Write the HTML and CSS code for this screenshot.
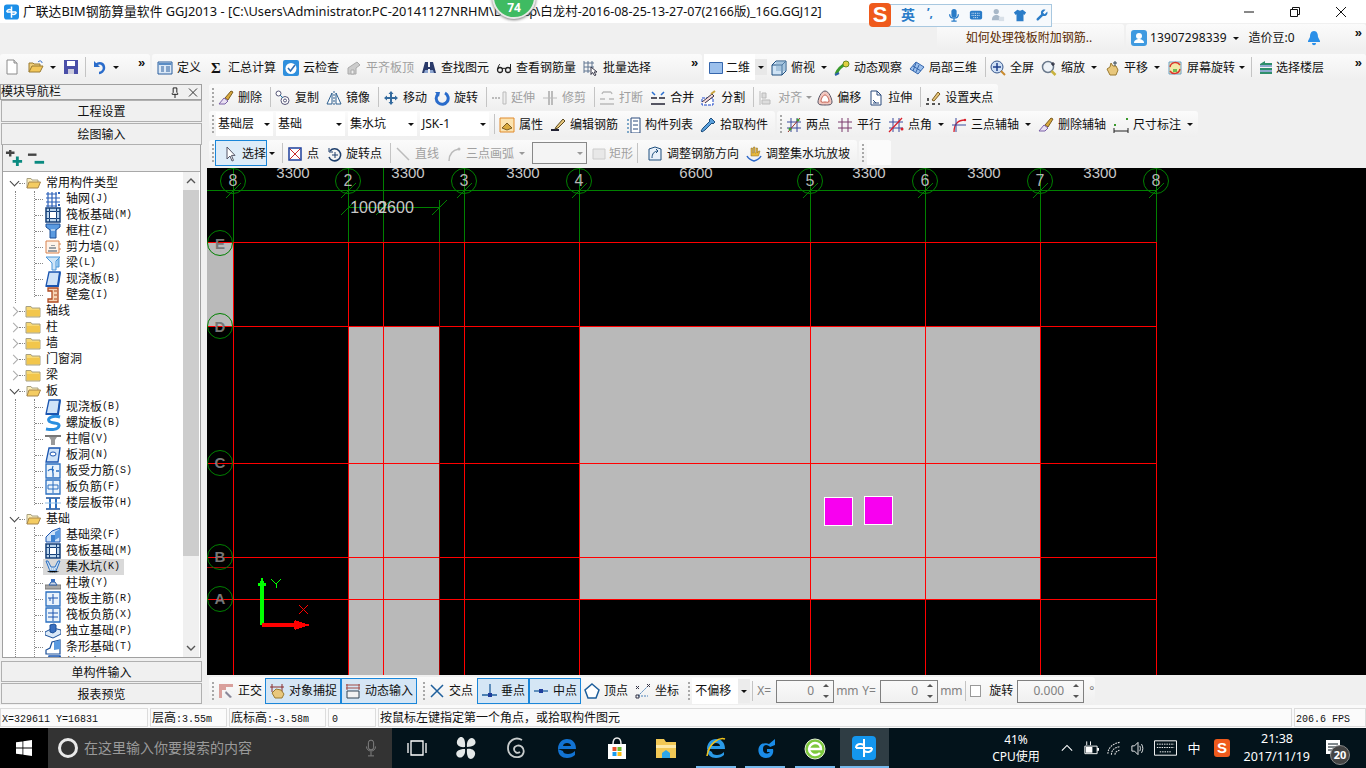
FILE: index.html
```html
<!DOCTYPE html>
<html lang="zh-CN">
<head>
<meta charset="utf-8">
<title>广联达BIM钢筋算量软件</title>
<link rel="stylesheet" href="styles.css">
</head>
<body>
<svg class="defs" aria-hidden="true">
<symbol id="new" viewBox="0 0 16 16"><path d="M3 1h7l3 3v11H3z" fill="#fff" stroke="#8a8a8a"/><path d="M10 1v3h3" fill="#ddd" stroke="#8a8a8a"/></symbol>
<symbol id="open" viewBox="0 0 16 16"><path d="M1 13V4h4l1 1h6v2" fill="#f0cf7a" stroke="#9a7a30"/><path d="M1 13l3-6h11l-3 6z" fill="#f3c75a" stroke="#9a7a30"/><path d="M10 3c2-2 4-1 4 1" stroke="#2a66c8" fill="none"/></symbol>
<symbol id="save" viewBox="0 0 16 16"><path d="M1 1h14v14H1z" fill="#4a4fa8"/><path d="M4 2h8v5H4z" fill="#fff"/><path d="M5 10h6v5H5z" fill="#ccd"/></symbol>
<symbol id="undo" viewBox="0 0 16 16"><path d="M3 2v6h6z" fill="#2a6ccb"/><path d="M5 6c3-3 8-2 8 3 0 3-3 5-5 5" stroke="#2a6ccb" stroke-width="2.5" fill="none"/></symbol>
<symbol id="def" viewBox="0 0 16 16"><path d="M1 2h14v12H1z" fill="#dbe8f6" stroke="#2a5f9e"/><path d="M1.500 3h13v2h-13z" fill="#5a8cc4"/><path d="M4 7h3M4 9h3M4 11h3M9 7h4M9 9h4M9 11h4" stroke="#2a5f9e"/></symbol>
<symbol id="cloud" viewBox="0 0 16 16"><rect width="16" height="16" y="0" rx="2" fill="#2f8fdd"/><circle cx="8" cy="8.500" r="5.500" fill="#fff"/><path d="M5 8l2.500 3L12 5" stroke="#2f6fb5" stroke-width="1.600" fill="none"/></symbol>
<symbol id="flat" viewBox="0 0 16 16"><path d="M2 8l9-6 3 3-4 3v6H2z" fill="#ccc" stroke="#aaa"/><path d="M5 10h3v4H5z" fill="#eee" stroke="#aaa"/></symbol>
<symbol id="bino" viewBox="0 0 16 16"><path d="M4 2h3v5h2V2h3l3 11H9V9H7v4H1z" fill="#2a3a6a"/><path d="M3 13h4v-3H4zM9 13h4l-1-3H9z" fill="#8ea6d0"/></symbol>
<symbol id="specs" viewBox="0 0 16 16"><circle cx="4" cy="10" r="2.500" fill="none" stroke="#222" stroke-width="1.300"/><circle cx="12" cy="10" r="2.500" fill="none" stroke="#222" stroke-width="1.300"/><path d="M6 9c1-1 3-1 4 0M2 9c0-3 1-4 2-5M14.500 9V4" stroke="#222" fill="none"/></symbol>
<symbol id="batch" viewBox="0 0 16 16"><path d="M1 1v12M5 1v12M9 1v8M1 3h10M1 7h10M1 11h6" stroke="#5f7590" fill="none"/><path d="M8 7l6 5-3 0 2 3-1.500 .5-2-3-1.500 2z" fill="#fff" stroke="#334"/></symbol>
<symbol id="v2d" viewBox="0 0 16 16"><path d="M1.500 2.500h13v11h-13z" fill="#9cc0ec" stroke="#3566ad"/></symbol>
<symbol id="cube" viewBox="0 0 16 16"><path d="M1 5l4-4h10v10l-4 4H1z" fill="#cfe3f5" stroke="#1e4f7e"/><path d="M1 5h10v10M11 5l4-4" fill="none" stroke="#1e4f7e"/><path d="M5 1h10v10H5z" fill="#7fa8c8" fill-opacity=".5"/></symbol>
<symbol id="orbit" viewBox="0 0 16 16"><path d="M2 14c2-5 5-8 11-11" stroke="#3a9a2c" stroke-width="3" fill="none"/><circle cx="12" cy="4" r="3" fill="#e0d040" stroke="#6a8a20"/><path d="M1 15l4-2" stroke="#2b5fa8" stroke-width="2"/></symbol>
<symbol id="local3d" viewBox="0 0 16 16"><path d="M1 9l6-7 8 5-6 7z" fill="#9cc0ec" stroke="#3566ad"/><path d="M4 6l8 5M7 3l-3 8M10 5l-3 7" stroke="#3566ad" fill="none"/></symbol>
<symbol id="full" viewBox="0 0 16 16"><circle cx="7" cy="7" r="6" fill="#cfe0f5" stroke="#37578c"/><path d="M7 3v8M3 7h8" stroke="#1f3f8c" stroke-width="1.500"/><path d="M11 11l4 4" stroke="#c98a2c" stroke-width="2"/></symbol>
<symbol id="zoom" viewBox="0 0 16 16"><circle cx="7" cy="7" r="5.500" fill="#eef3f8" stroke="#6b7a8c" stroke-width="1.500"/><path d="M10.500 11l4 4" stroke="#c9b23c" stroke-width="2.500"/><path d="M12 2v4M10 4h4" stroke="#223"/></symbol>
<symbol id="pan" viewBox="0 0 16 16"><path d="M3 9l3-2 1-4 2 3 3 0 2 4-2 5H6z" fill="#e8c77c" stroke="#9a7a30"/><path d="M11 1v5M9 3h4" stroke="#345"/></symbol>
<symbol id="rot" viewBox="0 0 16 16"><path d="M2 2h12v12H2z" fill="#f3e9a8" stroke="#6aa0c8"/><path d="M3 7a5.500 5.500 0 0 1 10-2M13 9a5.500 5.500 0 0 1-10 2" stroke="#d9352c" stroke-width="1.500" fill="none"/><path d="M6 9h4v3H6z" fill="#6cbd54"/></symbol>
<symbol id="floor" viewBox="0 0 16 16"><path d="M2 4l5-3v2h7v2H2zM2 8h12v2H2zM2 12h12v2H2z" fill="#2e8f6a"/><path d="M2 6h12M2 11h12" stroke="#2b5fa8"/></symbol>
<symbol id="del" viewBox="0 0 16 16"><path d="M7 8l6-7 2 1-5 8z" fill="#d9a93c" stroke="#7a5a20"/><path d="M6 8l4 3-3 3H1z" fill="#e9e0f2" stroke="#7a60a8"/></symbol>
<symbol id="copy" viewBox="0 0 16 16"><circle cx="3.500" cy="3.500" r="2.500" fill="#fff" stroke="#557"/><circle cx="10" cy="10.500" r="4" fill="#fff" stroke="#557"/><circle cx="10" cy="10.500" r="1.500" fill="none" stroke="#557"/><path d="M5 5l3 3" stroke="#27a"/></symbol>
<symbol id="mirror" viewBox="0 0 16 16"><path d="M1 14L6 3v11zM15 14L10 3v11z" fill="#fff" stroke="#2d5f8f"/><path d="M8 1v14" stroke="#2d5f8f" stroke-dasharray="2 1"/></symbol>
<symbol id="move" viewBox="0 0 16 16"><path d="M8 1l2.500 3H9v3h3V5.500L15 8l-3 2.500V9H9v3h1.500L8 15l-2.500-3H7V9H4v1.500L1 8l3-2.500V7h3V4H5.500z" fill="#336a9e"/></symbol>
<symbol id="rotate" viewBox="0 0 16 16"><path d="M11 3a6 6 0 1 1-7 1" stroke="#2a6ccb" stroke-width="3" fill="none"/><path d="M1 2l5 0-1 5z" fill="#2a6ccb"/></symbol>
<symbol id="ext" viewBox="0 0 16 16"><path d="M1 8h9" stroke="#bbb" stroke-dasharray="2 1" stroke-width="2"/><path d="M12 2h3v12h-3z" fill="#eee" stroke="#bbb"/></symbol>
<symbol id="trim" viewBox="0 0 16 16"><path d="M7 1v14M10 1v14" stroke="#bbb" stroke-width="2"/><path d="M1 8h14" stroke="#bbb"/></symbol>
<symbol id="brk" viewBox="0 0 16 16"><path d="M1 9h5M10 9h5M1 14h14M4 2h8M4 2l-1 2M12 2l1 2" stroke="#bbb" stroke-width="1.500" fill="none"/></symbol>
<symbol id="merge" viewBox="0 0 16 16"><path d="M1 8h6M9 8h6M1 14h14" stroke="#223" stroke-width="1.300"/><path d="M2 2l3 3M14 2l-3 3" stroke="#2b6fd0" stroke-width="1.500"/></symbol>
<symbol id="split" viewBox="0 0 16 16"><path d="M1 8h11v7H1z" fill="#fff" stroke="#1a44c8" stroke-dasharray="3 1"/><path d="M1 12l10-8 2 2-9 7" fill="#f7d7d7" stroke="#334"/><path d="M10 4l4-3" stroke="#c9a23c" stroke-width="2"/></symbol>
<symbol id="align" viewBox="0 0 16 16"><path d="M2 1v14" stroke="#bbb"/><path d="M4 3h4v5H4zM4 10h8v4H4z" fill="#ddd" stroke="#bbb"/></symbol>
<symbol id="offset" viewBox="0 0 16 16"><path d="M8 1c4 0 7 8 7 11s-3 3-7 3-7 0-7-3S4 1 8 1z" fill="#f2c8c0" stroke="#556"/><path d="M8 5c2 0 4 4 4 6s-2 1-4 1-4 1-4-1 2-6 4-6z" fill="#fff" stroke="#c45a4a"/></symbol>
<symbol id="stretch" viewBox="0 0 16 16"><path d="M3 1h6l4 4v10H3z" fill="#fff" stroke="#2a4a7c"/><path d="M9 1v4h4M5 10l3 3M5 13h6" stroke="#2a4a7c" fill="none"/></symbol>
<symbol id="grip2" viewBox="0 0 16 16"><path d="M1 14h3M7 14h3M13 14h2M3 8v3" stroke="#222" stroke-width="1.500"/><path d="M7 10l6-8 2 2-6 7z" fill="#e8c77c" stroke="#7a5a20"/></symbol>
<symbol id="prop" viewBox="0 0 16 16"><path d="M1 1h14v14H1z" fill="#fbe3b0" stroke="#e08a2c"/><path d="M3 11l5-5 5 5-5 2z" fill="#d9a93c" stroke="#7a5a20"/></symbol>
<symbol id="edit" viewBox="0 0 16 16"><path d="M1 13h8" stroke="#223" stroke-width="2"/><path d="M6 10l7-8 2 2-7 7-3 1z" fill="#e8c77c" stroke="#5a4a20"/></symbol>
<symbol id="list" viewBox="0 0 16 16"><path d="M2 2h2v2H2zM2 6h2v2H2zM2 10h2v2H2zM2 14h2v2H2z" fill="#7fa8c8"/><path d="M6 1h9v15H6z" fill="#fff" stroke="#2a4a7c"/><path d="M8 4h5M8 8h5M8 12h5" stroke="#2a4a7c"/></symbol>
<symbol id="pick" viewBox="0 0 16 16"><path d="M11 1l4 4-2 2-1-1-7 7-3 2-1-1 2-3 7-7-1-1z" fill="#5aa0dc" stroke="#1e4f7e"/></symbol>
<symbol id="twop" viewBox="0 0 16 16"><path d="M1 5h14M1 11h14M5 1v14M11 1v14" stroke="#3a4a9c"/><path d="M2 15L14 1" stroke="#a0342c"/><circle cx="4" cy="12" r="1.500" fill="#3a9a2c"/><circle cx="12" cy="3" r="1.500" fill="#3a9a2c"/></symbol>
<symbol id="para" viewBox="0 0 16 16"><path d="M1 5h14M1 11h14M5 1v14M11 1v14" stroke="#7a3a6c"/></symbol>
<symbol id="angle" viewBox="0 0 16 16"><path d="M1 5h14M1 11h14M5 1v14M11 1v14" stroke="#3a4a9c"/><path d="M1 15L14 1" stroke="#d9202c" stroke-width="1.300"/><circle cx="14" cy="12" r="1.500" fill="#d9202c"/></symbol>
<symbol id="arc3" viewBox="0 0 16 16"><path d="M3 15C3 7 7 3 14 3" stroke="#d9202c" fill="none" stroke-width="1.300"/><path d="M1 8h14M5 1v14" stroke="#3a4a9c"/><circle cx="14" cy="3" r="1.200" fill="#d9202c"/></symbol>
<symbol id="dim" viewBox="0 0 16 16"><path d="M1 11v5M15 11v5M1 14h14" stroke="#222"/><path d="M1 7h2v2H1zM13 1h2v2h-2z" fill="#3a9a2c"/></symbol>
<symbol id="cursor" viewBox="0 0 16 16"><path d="M5 1v12l3-3 2 5 1.500-.6-2-5H13z" fill="#fff" stroke="#556"/></symbol>
<symbol id="pt" viewBox="0 0 16 16"><path d="M2 2h12v12H2z" fill="#fff" stroke="#1e3f9c" stroke-width="1.500"/><path d="M3 3l10 10M13 3L3 13" stroke="#c82c2c"/></symbol>
<symbol id="rotpt" viewBox="0 0 16 16"><path d="M3 2v4h4" stroke="#1e3f6c" fill="none"/><path d="M4 5a6 6 0 1 1-1 6" stroke="#1e3f6c" stroke-width="1.500" fill="none"/><path d="M9 6v6M6 9h6" stroke="#1e3f6c"/></symbol>
<symbol id="line" viewBox="0 0 16 16"><path d="M2 2l12 12" stroke="#bbb" stroke-width="1.500"/></symbol>
<symbol id="arc" viewBox="0 0 16 16"><path d="M3 15C3 8 7 4 13 3" stroke="#bbb" stroke-width="1.500" fill="none"/><circle cx="13" cy="3" r="1.500" fill="#bbb"/></symbol>
<symbol id="rect" viewBox="0 0 16 16"><path d="M2 3h12v10H2z" fill="#e8e8e8" stroke="#ccc"/></symbol>
<symbol id="adjd" viewBox="0 0 16 16"><path d="M2 3l6-2 6 2v11H2z" fill="#e8f0fa" stroke="#1e4f7e"/><path d="M5 12c0-4 2-7 6-7M9 3l2 2-2 2" stroke="#1e4f7e" fill="none"/></symbol>
<symbol id="adjs" viewBox="0 0 16 16"><path d="M5 10V2h1.500v5h1V1H9v6h1V2h1.500v5l1-2h1.500l-1.500 5z" fill="#e8b83c" stroke="#8a6a20" stroke-width=".5"/><path d="M1 10c1 2 3 4 7 5 4-1 6-3 7-5" stroke="#2a66c8" fill="none" stroke-width="1.500"/></symbol>
<symbol id="ortho" viewBox="0 0 16 16"><path d="M1 1h14v3H8v3H4v8H1z" fill="#d9a09c"/><path d="M8 8l6 6-2 1-5-5z" fill="#889" /></symbol>
<symbol id="snap" viewBox="0 0 16 16"><path d="M3 1v8M13 1v8M1 4h14" stroke="#8a2c2c"/><path d="M3 10l4-4 5 1 3 4-2 4H6z" fill="#e8c77c" stroke="#9a7a30"/></symbol>
<symbol id="dyn" viewBox="0 0 16 16"><path d="M1 2h14M1 5h14M2 1v6M14 1v6" stroke="#a04a44"/><path d="M2 8h12v7H2z" fill="#f2f2f2" stroke="#345"/></symbol>
<symbol id="cross" viewBox="0 0 16 16"><path d="M2 2l12 12M14 2L2 14" stroke="#1e5f9c" stroke-width="1.500"/></symbol>
<symbol id="perp" viewBox="0 0 16 16"><path d="M9 1v11M1 12h15" stroke="#1e5f9c" stroke-width="1.300"/><path d="M7 10h4v4H7z" fill="#1e3f9c"/></symbol>
<symbol id="mid" viewBox="0 0 16 16"><path d="M1 8h14" stroke="#1e5f9c" stroke-width="1.300"/><path d="M6 6h4v4H6z" fill="#1e3f9c"/></symbol>
<symbol id="vert" viewBox="0 0 16 16"><path d="M8 1l7 6-3 8H4L1 7z" fill="#fff" stroke="#1e5f9c" stroke-width="1.500"/></symbol>
<symbol id="coord" viewBox="0 0 16 16"><path d="M3 13h10M3 13l9-9" stroke="#4a80b8" stroke-dasharray="2 1"/><path d="M1 3l3 3M4 3L1 6M12 1l3 3M15 1l-3 3M1 12h3v3H1z" stroke="#334" fill="none"/></symbol>
<symbol id="plusp" viewBox="0 0 20 20"><path d="M1 4h9M5.500 1v7" stroke="#444" stroke-width="2.500"/><path d="M8 13h10M13 8v10" stroke="#0a8a80" stroke-width="3"/></symbol>
<symbol id="minusm" viewBox="0 0 20 20"><path d="M1 6h9" stroke="#444" stroke-width="2.500"/><path d="M8 14h10" stroke="#0a8a80" stroke-width="3"/></symbol>
<symbol id="folder" viewBox="0 0 16 16"><path d="M1 3.500h5l1 1.500h8v9H1z" fill="#f7d874" stroke="#a8a080"/><path d="M2 7h13v6H2z" fill="#f2c64c"/></symbol>
<symbol id="folderopen" viewBox="0 0 16 16"><path d="M2 13V3.500h4l1 1.500h6v2" fill="#fbeebc" stroke="#a8a080"/><path d="M2 13l2-6h11.500L13 13z" fill="#f4cc62" stroke="#a8864a"/></symbol>
<symbol id="grid" viewBox="0 0 16 16"><path d="M1 3h11M1 7h14M1 11h14M1 15h11M3 1v15M7 1v15M11 1v15" stroke="#2a5fb8" stroke-width="1.200"/><path d="M13 1h2v2h-2zM13 13h2v2h-2z" fill="#2a5fb8"/></symbol>
<symbol id="raft" viewBox="0 0 16 16"><path d="M1 1h14v14H1z" fill="#bcd6ee" stroke="#143f78" stroke-width="1.500"/><path d="M4.500 4.500h7v7h-7z" fill="#fff" stroke="#143f78"/><path d="M1 4.500h3M1 11.500h3M12 4.500h3M12 11.500h3M4.500 1v3M11.500 1v3M4.500 12v3M11.500 12v3" stroke="#143f78"/></symbol>
<symbol id="col" viewBox="0 0 16 16"><path d="M1 1h14v3l-4 3v8H5V7L1 4z" fill="#5a9ae0" stroke="#1a4f98"/><path d="M6 7h4" stroke="#fff"/></symbol>
<symbol id="wall" viewBox="0 0 16 16"><path d="M1 2h13v12H1z" fill="#fdf3ea" stroke="#d9824c"/><path d="M3 11h9v2H3zM4 8h7v2H4zM6 6h4v1H6z" fill="#9aa0a6"/><path d="M14 5h2M14 10h2" stroke="#d9824c"/></symbol>
<symbol id="beam" viewBox="0 0 16 16"><path d="M1 2h14l-4 4v9H7V8L4 5z" fill="#cfe6f8" stroke="#4a96d8"/><path d="M11 6l3-3v9h-3" fill="#8fc4ee" stroke="#4a96d8"/></symbol>
<symbol id="slab" viewBox="0 0 16 16"><path d="M4 1h11l-2 14H1z" fill="#cfe3f8" stroke="#1a55b0" stroke-width="1.300"/><path d="M1 15h12l2-14" fill="none" stroke="#1a55b0" stroke-width="2"/></symbol>
<symbol id="niche" viewBox="0 0 16 16"><path d="M3 1h10v14H3v-3h4V4H3z" fill="#f7d3b4" stroke="#b04a20" stroke-width="1.300"/><path d="M9 4h3M9 8h3M9 12h3" stroke="#b04a20"/></symbol>
<symbol id="spiral" viewBox="0 0 16 16"><path d="M15 2C8 0 2 3 4 6s11 1 10 5-8 4-13 3" stroke="#2a8fe0" stroke-width="3" fill="none"/></symbol>
<symbol id="cap" viewBox="0 0 16 16"><path d="M0 4h16v2H0z" fill="#777"/><path d="M4 6h8l-2 3v5H6V9z" fill="#9a9a9a"/></symbol>
<symbol id="hole" viewBox="0 0 16 16"><path d="M4 1h11l-2 14H1z" fill="#cfe3f8" stroke="#1a55b0" stroke-width="1.300"/><ellipse cx="8" cy="7" rx="3" ry="2" fill="#fff" stroke="#1a55b0"/></symbol>
<symbol id="rebar" viewBox="0 0 16 16"><path d="M1 1h14v14H1z" fill="#eaf3fb" stroke="#2a6fc0" stroke-width="1.300"/><path d="M3 8c2-3 4-1 6-1M8 3c-2 3 1 6 0 11M11 8h3" stroke="#2a6fc0" fill="none" stroke-width="1.300"/></symbol>
<symbol id="neg" viewBox="0 0 16 16"><path d="M1 1h14v14H1z" fill="#eaf3fb" stroke="#2a6fc0" stroke-width="1.300"/><path d="M3 6h10v4H3zM8 2v12" stroke="#2a6fc0" fill="none"/></symbol>
<symbol id="band" viewBox="0 0 16 16"><path d="M1 3h14M1 14h14" stroke="#1a4f98" stroke-width="1.500"/><path d="M5 3v11M11 3v11" stroke="#2a6fc0" stroke-width="2"/><path d="M0 8h16" stroke="#8fbfe8"/></symbol>
<symbol id="fbeam" viewBox="0 0 16 16"><path d="M1 15V10l6-6 8-3v14z" fill="#cfe3f8" stroke="#1a55b0"/><path d="M6 15V8h4v7" fill="#3a80d0"/><path d="M10 5l5-3v8l-5 3" fill="#5a9ae0"/></symbol>
<symbol id="pit" viewBox="0 0 16 16"><path d="M1 2h2l3 6h4l3-6h2l-4 10H5z" fill="#cfe3f8" stroke="#2a6fc0"/><path d="M2 12c2 2 10 2 12 0M4 10h8" stroke="#8fa8c0" stroke-dasharray="1 1"/></symbol>
<symbol id="pier" viewBox="0 0 16 16"><path d="M0 10h16v4H0z" fill="#a8a8a8" stroke="#777"/><path d="M4 10l2-3h4l2 3z" fill="#cfd8e8" stroke="#2a5fa8"/><path d="M6 4h4v3H6z" fill="#3a70c0"/></symbol>
<symbol id="main" viewBox="0 0 16 16"><path d="M1 1h14v14H1z" fill="#eaf3fb" stroke="#2a6fc0" stroke-width="1.300"/><path d="M3 7h10M8 3v10M5 7v3" stroke="#1a55b0" fill="none"/></symbol>
<symbol id="fneg" viewBox="0 0 16 16"><path d="M1 1h14v14H1z" fill="#eaf3fb" stroke="#2a6fc0" stroke-width="1.300"/><path d="M3 6h10M3 10h10M8 2v12" stroke="#1a55b0"/></symbol>
<symbol id="indep" viewBox="0 0 16 16"><path d="M0 9l8-4 8 2v4l-8 4-8-3z" fill="#dbe9f7" stroke="#1a4f98"/><path d="M5 9V2l4-1 2 1v6l-3 2z" fill="#3a70c0" stroke="#1a4f98"/></symbol>
<symbol id="stripf" viewBox="0 0 16 16"><path d="M1 15v-4l4-2 2-6 8-2v14z" fill="#fff" stroke="#1a4f98" stroke-width="1.200"/><path d="M9 3l6-2v9l-6 1z" fill="#5a9ae0"/></symbol>
</svg>

<div class="app">
  <header class="title">
    <svg class="logo" viewBox="0 0 16 16"><rect width="16" height="16" rx="3" fill="#1c8fe8"/><path d="M8 2v12M3 8c0-3 3-3 5-2M13 8c0 3-3 3-5 2M3 8h10" stroke="#fff" stroke-width="1.600" fill="none"/></svg>
    <span class="title-text"><span class="tl">广联达BIM钢筋算量软件 GGJ2013 - [C:\Users\Administrator.PC-20141127NRHM\De<span class="under">sktop</span></span>\白龙村-2016-08-25-13-27-07(2166版)_16G.GGJ12]</span>
    <div class="winbtns">
      <span class="winbtn"><svg viewBox="0 0 12 12"><path d="M1 6h10" stroke="#111"/></svg></span>
      <span class="winbtn"><svg viewBox="0 0 12 12"><path d="M1.500 3.500h7v7h-7zM3.500 3.500v-2h7v7h-2" fill="none" stroke="#111"/></svg></span>
      <span class="winbtn"><svg viewBox="0 0 12 12"><path d="M1 1l10 10M11 1L1 11" stroke="#111"/></svg></span>
    </div>
  </header>
  <div class="badge">74</div>
  <div class="sogou">
    <span class="sg-s">S</span>
    <span class="sg-en">英</span>
    <span class="sg-i sg-p">’,</span>
    <svg class="sg-i" viewBox="0 0 16 16"><rect x="5" y="1" width="6" height="10" rx="3" fill="#2a7cc8"/><path d="M3 7c0 6 10 6 10 0M8 12v3M5 15h6" stroke="#2a7cc8" fill="none" stroke-width="1.500"/></svg>
    <svg class="sg-i" viewBox="0 0 16 16"><rect x="1" y="3" width="14" height="10" rx="2" fill="#2a7cc8"/><path d="M3 6h10M3 8.500h10M5 11h6" stroke="#fff" stroke-dasharray="1 1"/></svg>
    <svg class="sg-i" viewBox="0 0 16 16"><circle cx="6" cy="4" r="3" fill="#a8b8c8"/><path d="M1 14c0-5 3-6 5-6s3 .5 4 2v4z" fill="#a8b8c8"/><path d="M9 10h6v5H9z" fill="#d8e0e8"/></svg>
    <svg class="sg-i" viewBox="0 0 16 16"><path d="M5 2l3 1 3-1 4 3-2 3-1-1v8H4V7L3 8 1 5z" fill="#2a7cc8"/></svg>
    <svg class="sg-i" viewBox="0 0 16 16"><path d="M14 4l-3 3-2-2 3-3c-3-1-6 1-5 5L2 12c-1 2 1 3 2 2l5-5c4 1 6-2 5-5z" fill="#2a7cc8"/></svg>
  </div>

  <div class="row row1">
    <div class="seg seg-news"><span class="news">如何处理筏板附加钢筋..</span></div>
    <div class="seg seg-user">
      <svg class="i user-ic" viewBox="0 0 16 16"><rect width="16" height="16" rx="3" fill="#3f9ae0"/><circle cx="8" cy="6" r="3" fill="#fff"/><path d="M3 13c0-3 3-4 5-4s5 1 5 4z" fill="#fff"/></svg>
      <span class="phone">13907298339</span><span class="ar ar-user"></span><span class="beans">造价豆:0</span>
      <svg class="i bell" viewBox="0 0 16 16"><path d="M8 1c3 0 4 3 4 6l2 4v1H2v-1l2-4c0-3 1-6 4-6z" fill="#2a8fe8"/><path d="M6 13h4c0 3-4 3-4 0z" fill="#2a8fe8"/></svg>
      <span class="more more-end">»</span>
    </div>
  </div>

  <div class="row row2">
    <div class="seg seg-file">
      <svg class="i m4"><use href="#new"/></svg>
      <svg class="i m8"><use href="#open"/></svg>
      <span class="ar ar-file"></span>
      <svg class="i m4"><use href="#save"/></svg>
      <span class="sep sep-file"></span>
      <svg class="i m5"><use href="#undo"/></svg>
      <span class="ar ar-file"></span>
      <span class="more more-file">»</span>
    </div>
    <div class="seg seg-main">
      <a class="t"><svg class="i"><use href="#def"/></svg>定义</a>
      <a class="t"><span class="i sigma">Σ</span>汇总计算</a>
      <a class="t"><svg class="i"><use href="#cloud"/></svg>云检查</a>
      <a class="t off"><svg class="i"><use href="#flat"/></svg>平齐板顶</a>
      <a class="t"><svg class="i"><use href="#bino"/></svg>查找图元</a>
      <a class="t"><svg class="i"><use href="#specs"/></svg>查看钢筋量</a>
      <a class="t"><svg class="i"><use href="#batch"/></svg>批量选择</a>
      <span class="more more-main">»</span>
    </div>
    <div class="seg seg-view">
      <a class="t t-2d"><svg class="i"><use href="#v2d"/></svg>二维</a><span class="ar ar-2d"></span>
      <a class="t"><svg class="i"><use href="#cube"/></svg>俯视</a><span class="ar"></span>
      <a class="t"><svg class="i"><use href="#orbit"/></svg>动态观察</a>
      <a class="t"><svg class="i"><use href="#local3d"/></svg>局部三维</a>
      <span class="sep"></span>
      <a class="t"><svg class="i"><use href="#full"/></svg>全屏</a>
      <a class="t"><svg class="i"><use href="#zoom"/></svg>缩放</a><span class="ar"></span>
      <a class="t"><svg class="i"><use href="#pan"/></svg>平移</a><span class="ar"></span>
      <a class="t"><svg class="i"><use href="#rot"/></svg>屏幕旋转</a><span class="ar ar-s"></span>
      <span class="sep"></span>
      <a class="t tight"><svg class="i"><use href="#floor"/></svg>选择楼层</a>
      <span class="more more-end">»</span>
    </div>
  </div>

  <div class="work">
    <aside class="side">
      <div class="side-head"><span>模块导航栏</span><span class="side-acts"><svg viewBox="0 0 10 12"><path d="M3 1h4v5l1 1v1H2V7l1-1zM5 8v4" stroke="#111" fill="none"/></svg><svg viewBox="0 0 10 10"><path d="M1 1l8 8M9 1L1 9" stroke="#333"/></svg></span></div>
      <div class="side-btn b1">工程设置</div>
      <div class="side-btn b2">绘图输入</div>
      <div class="panel">
        <div class="panel-top"><svg class="pm"><use href="#plusp"/></svg><svg class="pm"><use href="#minusm"/></svg></div>
        <div class="panel-body">
          <div class="tree">
            <div class="node"><span class="chev open"></span><span class="dots"></span><svg class="i"><use href="#folderopen"/></svg><span>常用构件类型</span></div>
            <div class="kout"><div class="kin">
              <div class="kid"><span class="lbl"><svg class="i"><use href="#grid"/></svg>轴网<span class="k">(J)</span></span></div>
              <div class="kid"><span class="lbl"><svg class="i"><use href="#raft"/></svg>筏板基础<span class="k">(M)</span></span></div>
              <div class="kid"><span class="lbl"><svg class="i"><use href="#col"/></svg>框柱<span class="k">(Z)</span></span></div>
              <div class="kid"><span class="lbl"><svg class="i"><use href="#wall"/></svg>剪力墙<span class="k">(Q)</span></span></div>
              <div class="kid"><span class="lbl"><svg class="i"><use href="#beam"/></svg>梁<span class="k">(L)</span></span></div>
              <div class="kid"><span class="lbl"><svg class="i"><use href="#slab"/></svg>现浇板<span class="k">(B)</span></span></div>
              <div class="kid"><span class="lbl"><svg class="i"><use href="#niche"/></svg>壁龛<span class="k">(I)</span></span></div>
            </div></div>
            <div class="node"><span class="chev"></span><span class="dots"></span><svg class="i"><use href="#folder"/></svg><span>轴线</span></div>
            <div class="node"><span class="chev"></span><span class="dots"></span><svg class="i"><use href="#folder"/></svg><span>柱</span></div>
            <div class="node"><span class="chev"></span><span class="dots"></span><svg class="i"><use href="#folder"/></svg><span>墙</span></div>
            <div class="node"><span class="chev"></span><span class="dots"></span><svg class="i"><use href="#folder"/></svg><span>门窗洞</span></div>
            <div class="node"><span class="chev"></span><span class="dots"></span><svg class="i"><use href="#folder"/></svg><span>梁</span></div>
            <div class="node"><span class="chev open"></span><span class="dots"></span><svg class="i"><use href="#folderopen"/></svg><span>板</span></div>
            <div class="kout"><div class="kin">
              <div class="kid"><span class="lbl"><svg class="i"><use href="#slab"/></svg>现浇板<span class="k">(B)</span></span></div>
              <div class="kid"><span class="lbl"><svg class="i"><use href="#spiral"/></svg>螺旋板<span class="k">(B)</span></span></div>
              <div class="kid"><span class="lbl"><svg class="i"><use href="#cap"/></svg>柱帽<span class="k">(V)</span></span></div>
              <div class="kid"><span class="lbl"><svg class="i"><use href="#hole"/></svg>板洞<span class="k">(N)</span></span></div>
              <div class="kid"><span class="lbl"><svg class="i"><use href="#rebar"/></svg>板受力筋<span class="k">(S)</span></span></div>
              <div class="kid"><span class="lbl"><svg class="i"><use href="#neg"/></svg>板负筋<span class="k">(F)</span></span></div>
              <div class="kid"><span class="lbl"><svg class="i"><use href="#band"/></svg>楼层板带<span class="k">(H)</span></span></div>
            </div></div>
            <div class="node"><span class="chev open"></span><span class="dots"></span><svg class="i"><use href="#folderopen"/></svg><span>基础</span></div>
            <div class="kout"><div class="kin">
              <div class="kid"><span class="lbl"><svg class="i"><use href="#fbeam"/></svg>基础梁<span class="k">(F)</span></span></div>
              <div class="kid"><span class="lbl"><svg class="i"><use href="#raft"/></svg>筏板基础<span class="k">(M)</span></span></div>
              <div class="kid"><span class="lbl sel"><svg class="i"><use href="#pit"/></svg>集水坑<span class="k">(K)</span></span></div>
              <div class="kid"><span class="lbl"><svg class="i"><use href="#pier"/></svg>柱墩<span class="k">(Y)</span></span></div>
              <div class="kid"><span class="lbl"><svg class="i"><use href="#main"/></svg>筏板主筋<span class="k">(R)</span></span></div>
              <div class="kid"><span class="lbl"><svg class="i"><use href="#fneg"/></svg>筏板负筋<span class="k">(X)</span></span></div>
              <div class="kid"><span class="lbl"><svg class="i"><use href="#indep"/></svg>独立基础<span class="k">(P)</span></span></div>
              <div class="kid"><span class="lbl"><svg class="i"><use href="#stripf"/></svg>条形基础<span class="k">(T)</span></span></div>
              <div class="kid"><span class="lbl"><svg class="i"><use href="#slab"/></svg>桩承台<span class="k">(V)</span></span></div>
            </div></div>
          </div>
          <div class="vbar">
            <span class="vb-btn"><svg viewBox="0 0 10 6"><path d="M1 5l4-4 4 4" stroke="#555" stroke-width="1.400" fill="none"/></svg></span>
            <span class="vb-thumb"></span>
            <span class="vb-track"></span>
            <span class="vb-btn"><svg viewBox="0 0 10 6"><path d="M1 1l4 4 4-4" stroke="#555" stroke-width="1.400" fill="none"/></svg></span>
          </div>
        </div>
      </div>
      <div class="side-btn b3">单构件输入</div>
      <div class="side-btn b4">报表预览</div>
    </aside>

    <main class="right">
      <div class="bar bar3">
        <div class="seg seg-edit">
          <span class="grip"></span>
          <a class="t"><svg class="i"><use href="#del"/></svg>删除</a>
          <span class="sep"></span>
          <a class="t"><svg class="i"><use href="#copy"/></svg>复制</a>
          <a class="t"><svg class="i"><use href="#mirror"/></svg>镜像</a>
          <span class="sep"></span>
          <a class="t"><svg class="i"><use href="#move"/></svg>移动</a>
          <a class="t"><svg class="i"><use href="#rotate"/></svg>旋转</a>
          <span class="sep"></span>
          <a class="t off"><svg class="i"><use href="#ext"/></svg>延伸</a>
          <a class="t off"><svg class="i"><use href="#trim"/></svg>修剪</a>
          <span class="sep"></span>
          <a class="t off"><svg class="i"><use href="#brk"/></svg>打断</a>
          <a class="t"><svg class="i"><use href="#merge"/></svg>合并</a>
          <a class="t"><svg class="i"><use href="#split"/></svg>分割</a>
          <span class="sep"></span>
          <a class="t off"><svg class="i"><use href="#align"/></svg>对齐</a><span class="ar ar-s ar-off"></span>
          <a class="t"><svg class="i"><use href="#offset"/></svg>偏移</a>
          <a class="t"><svg class="i"><use href="#stretch"/></svg>拉伸</a>
          <span class="sep"></span>
          <a class="t"><svg class="i"><use href="#grip2"/></svg>设置夹点</a>
        </div>
      </div>
      <div class="bar bar4">
        <div class="seg seg-comp">
          <span class="grip"></span>
          <span class="combo c1">基础层<span class="ar ar-c"></span></span>
          <span class="combo c2">基础<span class="ar ar-c"></span></span>
          <span class="combo c2">集水坑<span class="ar ar-c"></span></span>
          <span class="combo c2">JSK-1<span class="ar ar-c"></span></span>
          <span class="sep"></span>
          <a class="t"><svg class="i"><use href="#prop"/></svg>属性</a>
          <a class="t"><svg class="i"><use href="#edit"/></svg>编辑钢筋</a>
          <a class="t"><svg class="i"><use href="#list"/></svg>构件列表</a>
          <a class="t"><svg class="i"><use href="#pick"/></svg>拾取构件</a>
        </div>
        <div class="seg seg-aux">
          <span class="grip"></span>
          <a class="t"><svg class="i"><use href="#twop"/></svg>两点</a>
          <a class="t"><svg class="i"><use href="#para"/></svg>平行</a>
          <a class="t"><svg class="i"><use href="#angle"/></svg>点角</a><span class="ar"></span>
          <a class="t"><svg class="i"><use href="#arc3"/></svg>三点辅轴</a><span class="ar"></span>
          <a class="t"><svg class="i"><use href="#del"/></svg>删除辅轴</a>
          <a class="t"><svg class="i"><use href="#dim"/></svg>尺寸标注</a><span class="ar"></span>
        </div>
      </div>
      <div class="bar bar5">
        <div class="seg seg-draw">
          <span class="grip"></span>
          <a class="t act act-sel"><svg class="i"><use href="#cursor"/></svg>选择</a><span class="ar ar-10"></span>
          <span class="sep"></span>
          <a class="t"><svg class="i"><use href="#pt"/></svg>点</a>
          <a class="t"><svg class="i"><use href="#rotpt"/></svg>旋转点</a>
          <span class="sep"></span>
          <a class="t off"><svg class="i"><use href="#line"/></svg>直线</a>
          <a class="t off"><svg class="i"><use href="#arc"/></svg>三点画弧</a><span class="ar ar-10 ar-off"></span>
          <span class="combo c3"><span class="ar ar-c ar-off"></span></span>
          <a class="t off t-rect"><svg class="i"><use href="#rect"/></svg>矩形</a>
          <span class="sep sep-rect"></span>
          <a class="t"><svg class="i"><use href="#adjd"/></svg>调整钢筋方向</a>
          <a class="t"><svg class="i"><use href="#adjs"/></svg>调整集水坑放坡</a>
        </div>
        <div class="seg seg-blank"><span class="grip"></span><span class="blank"></span></div>
      </div>

      <svg class="cad" viewBox="207 168 1159 507" role="img" aria-label="CAD 绘图区">
        <rect class="bg" x="207" y="168" width="1159" height="507"/>
        <path class="slab-g" d="M207 243h26v84h-26zM348 327h91v348h-91zM579 327h461v272H579z"/>
        <path class="gl" d="M207 190.500H1157M233.500 168V243M348.500 168V243M383.500 168V243M439.500 200V243M464.500 168V243M579.500 168V243M810.500 168V243M925.500 168V243M1040.500 168V243M1156.500 168V243M348 207.500H439"/>
        <path class="rd" d="M207 242.500H1157M207 326.500H1157M207 463.500H1157M207 557.500H1157M207 599.500H1157M233.500 243V675M348.500 243V675M383.500 243V675M464.500 243V675M579.500 243V675M810.500 243V675M925.500 243V675M1040.500 243V675M1156.500 243V675"/>
        <path class="rd-dk" d="M439.500 243V675M207 567.500H233"/>
        <g class="gl bub">
          <circle cx="233" cy="181" r="12.500"/><circle cx="348" cy="181" r="12.500"/><circle cx="464" cy="181" r="12.500"/><circle cx="579" cy="181" r="12.500"/><circle cx="810" cy="181" r="12.500"/><circle cx="925" cy="181" r="12.500"/><circle cx="1040" cy="181" r="12.500"/><circle cx="1156" cy="181" r="12.500"/>
          <circle cx="220" cy="243" r="12.500"/><circle cx="220" cy="326" r="12.500"/><circle cx="220" cy="463" r="12.500"/><circle cx="220" cy="557" r="12.500"/><circle cx="220" cy="599" r="12.500"/>
        </g>
        <path class="tick" d="M226 198L241 183M341 198L356 183M457 198L472 183M572 198L587 183M803 198L818 183M918 198L933 183M1033 198L1048 183M1149 198L1164 183M341 215L356 200M376 215L391 200M432 215L447 200"/>
        <g class="dim">
          <text x="293" y="178">3300</text><text x="408" y="178">3300</text><text x="523" y="178">3300</text><text x="696" y="178">6600</text><text x="869" y="178">3300</text><text x="984" y="178">3300</text><text x="1100" y="178">3300</text>
        </g>
        <g class="dim dim2"><text x="368" y="213">1000</text><text x="396" y="213">2600</text></g>
        <g class="num">
          <text x="233" y="186">8</text><text x="348" y="186">2</text><text x="464" y="186">3</text><text x="579" y="186">4</text><text x="810" y="186">5</text><text x="925" y="186">6</text><text x="1040" y="186">7</text><text x="1156" y="186">8</text>
        </g>
        <g class="ltr"><text x="220" y="249">E</text><text x="220" y="332">D</text><text x="220" y="468">C</text><text x="220" y="562">B</text><text x="220" y="604">A</text></g>
        <rect class="pit" x="824.500" y="497.500" width="28" height="28"/>
        <rect class="pit" x="864.500" y="496.500" width="28" height="28"/>
        <path class="ax-g" d="M260 625V586h-2v-3h2l2-7 2 7h2v3h-2v39z"/>
        <path class="ax-r" d="M262 623h32v-2l1-1 8 3 8 2-8 2-8 3-1-1v-2h-32z"/>
        <path class="lab-g" d="M271 579l5 5 5-5M276 584v4"/>
        <path class="lab-r" d="M299 605l9 9M308 605l-9 9"/>
      </svg>

      <div class="bar bar6">
        <div class="seg seg-snap">
          <span class="grip"></span>
          <a class="t"><svg class="i"><use href="#ortho"/></svg>正交</a>
          <a class="t act act-g"><svg class="i"><use href="#snap"/></svg>对象捕捉</a>
          <a class="t act"><svg class="i"><use href="#dyn"/></svg>动态输入</a>
          <span class="grip grip-s"></span>
          <a class="t"><svg class="i"><use href="#cross"/></svg>交点</a>
          <a class="t act act-g act-p"><svg class="i"><use href="#perp"/></svg>垂点</a>
          <a class="t act"><svg class="i"><use href="#mid"/></svg>中点</a>
          <a class="t t-v"><svg class="i"><use href="#vert"/></svg>顶点</a>
          <a class="t"><svg class="i"><use href="#coord"/></svg>坐标</a>
          <span class="grip grip-o"></span>
          <span class="combo c4">不偏移</span><span class="ar ar-10 ar-box"></span>
          <span class="sep sep-x"></span>
          <span class="lbl-x">X=</span>
          <span class="spin"><span class="val">0</span><span class="ud"><i class="up"></i><i class="dn"></i></span></span>
          <span class="unit">mm</span><span class="lbl-y">Y=</span>
          <span class="spin"><span class="val">0</span><span class="ud"><i class="up"></i><i class="dn"></i></span></span>
          <span class="unit">mm</span>
          <span class="sep sep-x"></span>
          <span class="chk"></span>
          <span class="rot-l">旋转</span>
          <span class="spin spin-w"><span class="val">0.000</span><span class="ud"><i class="up"></i><i class="dn"></i></span></span>
          <span class="deg">°</span>
        </div>
      </div>
    </main>
  </div>

  <div class="status">
    <span class="cell s1"><span class="k">X=329611 Y=16831</span></span>
    <span class="cell s2">层高<span class="k">:3.55m</span></span>
    <span class="cell s3">底标高<span class="k">:-3.58m</span></span>
    <span class="cell s4"><span class="k">0</span></span>
    <span class="cell s5">按鼠标左键指定第一个角点，或拾取构件图元</span>
    <span class="cell s6"><span class="k">206.6 FPS</span></span>
  </div>

  <footer class="task">
    <span class="tb-win"><svg viewBox="0 0 16 16"><path d="M0 2.300l6.500-.9v6.200H0zM7.300 1.300L16 0v7.600H7.300zM0 8.400h6.500v6.200L0 13.700zM7.300 8.400H16V16l-8.700-1.200z" fill="#fff"/></svg></span>
    <div class="tb-search">
      <span class="cortana"></span>
      <span class="tb-hint">在这里输入你要搜索的内容</span>
      <svg class="tb-mic" viewBox="0 0 16 24"><rect x="4.500" y="1.500" width="7" height="13" rx="3.500" fill="none" stroke="#9a9a9a"/><path d="M2 10c0 8 12 8 12 0M8 17v5M4 22.500h8" fill="none" stroke="#9a9a9a"/></svg>
    </div>
    <span class="tb"><svg viewBox="0 0 24 24"><path d="M6 5h12v14H6zM3 7v10M21 7v10" fill="none" stroke="#fff" stroke-width="1.300"/></svg></span>
    <span class="tb"><svg viewBox="0 0 24 24"><path d="M11 11C4 12 1 7 4 3s8-2 7 8zM13 11c-1-7 4-11 7-8s2 8-7 8zM13 13c7-1 10 4 7 8s-8 2-7-8zM11 13c1 7-4 10-7 8s-3-8 7-8z" fill="#e4e8e8"/></svg></span>
    <span class="tb"><svg viewBox="0 0 24 24"><path d="M18 4C11 0 4 5 4 12s6 10 11 9 6-7 3-10-8-1-8 2 3 5 6 3" fill="none" stroke="#c8cccc" stroke-width="1.800"/></svg></span>
    <span class="tb tb-gap"><svg viewBox="0 0 24 24"><path d="M3 13h18C21 6 17 3 12 3S3 7 3 13c0 6 4 9 9 9 3 0 6-1 8-3v-4c-2 2-4 3-7 3-3 0-5-1-5-3zM8 10c0-2 2-3 4-3s4 1 4 3z" fill="#1273d3" fill-rule="evenodd"/></svg></span>
    <span class="tb"><svg viewBox="0 0 24 24"><path d="M3 8h18v15H3z" fill="#fff"/><path d="M8 8c0-8 8-8 8 0" fill="none" stroke="#eee" stroke-width="1.500"/><path d="M7.500 11h4v4h-4z" fill="#e8502c"/><path d="M12.500 11h4v4h-4z" fill="#6cbb2c"/><path d="M7.500 16h4v4h-4z" fill="#1a9cf0"/><path d="M12.500 16h4v4h-4z" fill="#fbbc14"/></svg></span>
    <span class="tb"><svg viewBox="0 0 24 24"><path d="M2 3h8l2 3h10v16H2z" fill="#f2c855"/><path d="M2 9h20v3H2z" fill="#fde9a8"/><path d="M8 22v-5l4-3 4 3v5z" fill="#2fa5e8"/></svg></span>
    <span class="tb run"><svg viewBox="0 0 24 24"><path d="M3 13h18C21 6 17 3 12 3S3 7 3 13c0 6 4 9 9 9 3 0 6-1 8-3v-3c-2 2-4 3-7 3-3 0-5-1-5-3zM8 10c0-2 2-3 4-3s4 1 4 3z" fill="#2a9ae8" fill-rule="evenodd"/><path d="M21 3C15 1 5 7 3 20" fill="none" stroke="#eec11c" stroke-width="1.600"/></svg></span>
    <span class="tb run"><svg viewBox="0 0 24 24"><path d="M22 3l-6 5c-2-1-8-2-10 3s1 11 7 11 8-5 7-9h-6v3h3c-1 2-7 3-7-3s6-4 7-2l5-2z" fill="#1a8ce8"/></svg></span>
    <span class="tb run"><svg viewBox="0 0 24 24"><circle cx="12" cy="13" r="10" fill="#7cc83c" stroke="#e4f0d4"/><path d="M6 13h12c0-4-3-6-6-6s-6 3-6 6 3 6 6 6c2 0 4-1 5-2" fill="none" stroke="#fff" stroke-width="2.400"/></svg></span>
    <span class="tb run-cur"><svg viewBox="0 0 24 24"><rect width="24" height="24" rx="4" fill="#1496ee"/><path d="M12 3v18M4 12c0-4 4-5 8-3M20 12c0 4-4 5-8 3M4 12h16" fill="none" stroke="#fff" stroke-width="2"/></svg></span>
    <div class="cpu"><span>41%</span><span>CPU使用</span></div>
    <span class="tray w22"><svg viewBox="0 0 14 8"><path d="M1 7l6-6 6 6" fill="none" stroke="#fff" stroke-width="1.300"/></svg></span>
    <span class="tray w24"><svg viewBox="0 0 18 14"><path d="M3 5h13v8H3z" fill="none" stroke="#fff"/><path d="M4 6h7v6H4zM16 7h2v3h-2z" fill="#fff"/><path d="M5 0v4M9 0v4" stroke="#fff"/></svg></span>
    <span class="tray w26"><svg viewBox="0 0 18 16"><path d="M1 14C1 7 7 2 15 1M5 15c0-5 3-8 9-9M9 15c0-3 2-4 5-5" fill="none" stroke="#ddd" stroke-width="1.200" stroke-dasharray="2 1"/></svg></span>
    <span class="tray w20"><svg viewBox="0 0 16 16"><path d="M1 5h3l4-4v14l-4-4H1z" fill="none" stroke="#fff"/><path d="M10 5c1 2 1 4 0 6M12 3c2 3 2 7 0 10" fill="none" stroke="#fff"/></svg></span>
    <span class="tray w34"><svg viewBox="0 0 24 16"><path d="M.5.500h23v15H.5z" fill="none" stroke="#fff"/><path d="M3 4h18M3 7.500h18M6 12h12" stroke="#fff" stroke-dasharray="1.500 1"/></svg></span>
    <span class="tray w24 ime">中</span>
    <span class="tray w32"><span class="sg-s sg-t">S</span></span>
    <div class="clock"><span>21:38</span><span>2017/11/19</span></div>
    <div class="note"><svg viewBox="0 0 16 16"><path d="M1 1h14v14H1z" fill="#fff"/><path d="M3 5h10M3 8h10M3 11h10" stroke="#03131b"/></svg><span class="note-n">20</span></div>
  </footer>
</div>
</body>
</html>
```

FILE: styles.css
```css
*{box-sizing:border-box}
html,body{margin:0;padding:0;height:100%}
body{width:1366px;height:768px;overflow:hidden;background:#f0f0f0;color:#111;font:12px/16px "Noto Sans","Noto Sans CJK SC",sans-serif}
.defs{width:0;height:0;position:absolute}
.app{position:relative;width:1366px;height:768px;display:flex;flex-direction:column;overflow:hidden}
.i{width:16px;height:16px;flex:none;display:block}

/* title bar */
.title{height:23px;background:#fff;display:flex;align-items:center;padding-left:4px;flex:none}
.logo{width:15px;height:16px;flex:none;margin-right:4px}
.title-text{flex:1;white-space:nowrap;font-size:12.470px}
.tl{font-size:12.800px}
.under{letter-spacing:-1.600px}
.winbtns{display:flex;margin-right:2px}
.winbtn{width:46px;height:23px;display:flex;align-items:center;justify-content:center}
.winbtn svg{width:12px;height:12px}
.badge{position:absolute;left:492px;top:-25px;width:44px;height:44px;border-radius:50%;background:#3fbb62;border:2px solid #e8e8e8;box-shadow:0 1px 3px #777;color:#fff;font-weight:700;font-size:12px;text-align:center;padding-top:24px;line-height:14px}
.sogou{position:absolute;left:869px;top:3px;width:183px;height:24px;display:flex;align-items:center}
.sogou::before{content:"";position:absolute;left:14px;right:0;top:1px;bottom:0;background:#f6f9fc;border:1px solid #a8c8e0}
.sogou>*{position:relative}
.sg-s{width:22px;height:24px;background:#ef5a1c;border-radius:4px;color:#fff;font:700 22px/24px "Liberation Sans",sans-serif;text-align:center;flex:none}
.sg-en{color:#2a7cc8;font-weight:700;font-size:14px;width:16px;margin-left:10px;flex:none}
.sg-i{width:14px;height:16px;margin-left:8px;flex:none;color:#2a7cc8;font-weight:700;line-height:12px}
.sg-p{margin-left:10px;width:12px}

/* top rows */
.row{display:flex;flex:none}
.seg{display:flex;align-items:center;height:26px;background:linear-gradient(#fbfbfb,#efefef);border-radius:3px;flex:none}
.row1{height:31px;padding:1px 0 0 937px;gap:2px}
.row1 .seg{padding-top:2px}
.seg-news{width:187px;justify-content:center;padding-right:3px}
.news{color:#5a2a00}
.seg-user{flex:1;padding-left:5px}
.phone{margin-left:3px;letter-spacing:.1px}
.ar-user{margin:0 3px}
.beans{margin-left:4px}
.bell{margin-left:11px}
.more{font:700 13px/12px "Liberation Sans",sans-serif;color:#111;align-self:flex-start;margin-top:3px}
.row1 .more{margin-top:1px}
.more-end{margin-left:auto;margin-right:4px}
.row2{height:30px;gap:2px}
.seg-file{width:150px}
.m4{margin-left:4px}
.m8{margin-left:8px}
.m5{margin-left:5px}
.ar-file{width:12px;margin-left:3px}
.seg-file .sep-file{margin-left:6px}
.more-file{margin-left:16px}
.seg-main{width:550px;padding-left:1px}
.more-main{margin-left:37px}
.seg-view{flex:1}
.t{display:flex;align-items:center;gap:4px;padding:2px 3px 0 4px;white-space:nowrap;flex:none;height:26px}
.off{color:#a0a0a0}
.sigma{font:700 15px/16px "Liberation Serif",serif;text-align:center}
.t-2d{background:#fff;width:51px;gap:2px;padding-left:4px}
.ar-2d{background:#e8e8e8;height:24px;width:12px}
.tight{gap:2px;padding-left:2px;margin-left:4px}
.ar{width:12px;height:16px;flex:none;display:flex;align-items:center;justify-content:center}
.ar::before{content:"";border:3px solid transparent;border-top:3px solid #111;border-bottom:0}
.ar-s{width:8px}
.ar-10{width:10px}
.ar-off::before{border-top-color:#999}
.sep{width:1px;height:20px;background:#c4c4c4;margin-left:5px;flex:none}
.sep-rect{margin:0 5px 0 1px}

/* work area */
.work{display:flex;flex:none;height:621px}
.side{width:202px;margin-right:5px;display:flex;flex-direction:column;flex:none}
.side-head{height:16px;border:1px solid #a0a0a0;display:flex;justify-content:space-between;align-items:center;line-height:14px;padding-right:3px;flex:none}
.side-acts{display:flex;gap:8px;align-items:center}
.side-acts svg{width:10px;height:11px}
.side-btn{height:22px;border:1px solid #b0b0b0;text-align:center;line-height:21px;font-size:12px;margin-left:1px;flex:none}
.b2{margin-top:1px}
.b3{margin-top:3px;height:21px;line-height:21px}
.b4{margin-top:1px;height:21px;line-height:21px}
.panel{margin:0 1px 0 2px;height:513px;border:1px solid #a0a0a0;border-top:0;display:flex;flex-direction:column;overflow:hidden;flex:none}
.panel-top{height:27px;display:flex;align-items:center;gap:3px;padding:0 0 0 2px;flex:none;border-bottom:1px solid #a8a8a8}
.pm{width:19px;height:19px;flex:none}
.panel-body{flex:1;display:flex;background:#fff;min-height:0;overflow:hidden}
.tree{flex:1;min-width:0;padding-top:3px;overflow:hidden}
.node,.kid{height:16px;display:flex;align-items:center;white-space:nowrap}
.node{padding-left:6px}
.chev{width:10px;height:10px;flex:none;display:flex;align-items:center;justify-content:center}
.chev::before{content:"";width:6px;height:6px;border:solid #aaa;border-width:1.500px 1.500px 0 0;transform:rotate(45deg);margin-left:-2px}
.chev.open::before{border-color:#444;transform:rotate(135deg);margin:-3px 0 0 0}
.dots{width:6px;border-top:1px dotted #888;flex:none}
.node .i{margin-right:5px}
.kout{margin-left:12px;border-left:1px dotted #888;display:flex;flex-direction:column}
.kin{margin-left:18px;border-left:1px dotted #888;display:flex;flex-direction:column;margin-bottom:6px}
.kid:last-child{margin-bottom:-6px}
.kid::before{content:"";width:8px;border-top:1px dotted #888;flex:none}
.lbl{display:flex;align-items:center;gap:5px;padding:0 4px 0 2px;height:16px}
.lbl .k{margin-left:-5px}
.sel{background:#d9d9d9}
.k{font:10px/16px "Liberation Mono",monospace}
.vbar{width:16px;flex:none;margin-right:1px;display:flex;flex-direction:column;background:#f0f0f0}
.vb-btn{height:18px;display:flex;align-items:center;justify-content:center;flex:none}
.vb-btn svg{width:10px;height:6px}
.vb-thumb{height:366px;background:#cdcdcd;flex:none}
.vb-track{flex:1}

/* right column */
.right{flex:1;min-width:0;display:flex;flex-direction:column}
.bar{display:flex;flex:none;padding-left:2px;gap:2px}
.bar3{height:27px}
.bar4{height:29px}
.bar5{height:28px}
.bar6{height:30px;padding-top:2px}
.grip{width:2px;height:18px;margin:0 0 0 3px;flex:none;background:repeating-linear-gradient(#a8a8a8 0 2px,transparent 2px 4px)}
.seg-edit{width:789px}
.seg-comp{width:566px}
.combo{display:flex;align-items:center;justify-content:space-between;background:#fff;height:24px;flex:none;white-space:nowrap}
.c1{width:57px;padding-left:2px;margin-left:2px}
.c2{width:69px;margin-left:3px;padding-left:2px}
.ar-c{width:10px;margin-right:1px}
.seg-aux{width:421px}
.seg-draw{width:648px}
.seg-blank{width:32px}
.blank{flex:1;height:24px;background:#fbfbfb;margin-left:3px}
.act{background:#d5e6f5;border:1px solid #1a86d9;padding:1px 3px 0;height:26px}
.act-sel{margin-left:1px;padding-left:6px;padding-right:3px;width:52px;background:#deecf8}
.c3{width:55px;margin-left:5px;border:1px solid #888;height:22px;justify-content:flex-end;background:#f4f4f4}
.t-rect{gap:2px}
.cad{display:block;width:1159px;height:507px;flex:none;shape-rendering:crispEdges}
.bg{fill:#000}
.slab-g{fill:#b9b9b9}
.gl{stroke:#008000;fill:none;stroke-width:1}
.rd{stroke:#f00;fill:none;stroke-width:1}
.rd-dk{stroke:#a00000;fill:none;stroke-width:1}
.tick{stroke:#008000;fill:none;stroke-width:1;shape-rendering:auto}
.bub circle{shape-rendering:auto}
.cad text{font-family:"Liberation Sans",sans-serif;text-anchor:middle;shape-rendering:auto}
.dim text{fill:#c8c8c8;font-size:15px}
.dim2 text{font-size:16px}
.num text{fill:#b4b4b4;font-size:16px}
.ltr text{fill:#777;font-size:15px;font-weight:700}
.pit{fill:#f800f0;stroke:#fff;stroke-width:1}
.ax-g{fill:#0f0}
.ax-r{fill:#f00}
.lab-g{stroke:#0f0;fill:none}
.lab-r{stroke:#f00;fill:none}

/* bottom snap bar */
.seg-snap{width:886px;height:28px}
.seg-snap .t{padding-top:0}
.seg-snap .act{height:26px}
.act-p{margin-left:1px}
.t-v{margin-left:-1px}
.grip-s{margin:0 0 0 6px}
.grip-o{margin:0 2px 0 6px}
.c4{width:46px;padding-left:3px;height:26px}
.ar-box{height:24px;width:12px;background:#ececec}
.sep-x{margin-left:2px;margin-right:4px}
.lbl-x,.lbl-y,.unit,.deg{color:#808080;white-space:nowrap;flex:none}
.lbl-x{width:19px}
.lbl-y{width:18px;margin-left:3px}
.unit{margin-left:2px;width:23px}
.spin{width:58px;height:23px;border:1px solid #808080;display:flex;align-items:center;justify-content:flex-end;flex:none}
.spin-w{width:67px}
.val{color:#808080;padding-right:5px}
.ud{width:14px;height:21px;display:flex;flex-direction:column;align-items:center;justify-content:space-around}
.ud i{display:block;border:3px solid transparent}
.up{border-bottom-color:#555!important;border-top:0!important}
.dn{border-top-color:#555!important;border-bottom:0!important}
.chk{width:11px;height:12px;border:1px solid #999;background:#fff;flex:none}
.rot-l{margin:0 4px 0 8px;white-space:nowrap;flex:none}
.deg{margin-left:5px}

/* status */
.status{height:23px;flex:none;display:flex;gap:2px;padding:3px 0 1px;background:#fafafa}
.cell{height:19px;border:1px solid #dcdcdc;background:#fbfbfb;line-height:17px;padding-left:1px;white-space:nowrap;flex:none}
.s1{width:148px}
.s2{width:77px}
.s3{width:97px}
.s4{width:48px;padding-left:3px}
.s5{width:914px}
.s6{flex:1}

/* taskbar */
.task{height:40px;flex:none;background:#03131b;display:flex;align-items:center;color:#fff}
.tb-win{width:48px;height:40px;background:#000;display:flex;align-items:center;justify-content:center;flex:none}
.tb-win svg{width:16px;height:16px}
.tb-search{width:344px;height:40px;background:#333;display:flex;align-items:center;padding-left:10px;flex:none}
.cortana{width:20px;height:20px;border:3px solid #e8e8e8;border-radius:50%;flex:none}
.tb-hint{color:#9a9a9a;font-size:14px;margin-left:6px;flex:1;line-height:20px}
.tb-mic{width:12px;height:18px;margin-right:15px;flex:none}
.tb{width:49.500px;height:40px;display:flex;align-items:center;justify-content:center;flex:none}
.tb-gap{margin-left:2px}
.tb svg{width:24px;height:24px}
.run{background:linear-gradient(#76b9ed,#76b9ed) center bottom/40px 2px no-repeat}
.run-cur{background:linear-gradient(#76b9ed,#76b9ed) center bottom/100% 2px no-repeat,#2f3d44}
.cpu{width:70px;margin-left:92px;display:flex;flex-direction:column;align-items:center;font-size:12px;line-height:17px;flex:none}
.tray{height:40px;display:flex;align-items:center;justify-content:center;flex:none}
.tray svg{display:block}
.w20{width:20px}.w22{width:22px;margin-left:5px}.w24{width:24px}.w26{width:26px}.w32{width:32px}.w34{width:34px}
.w22 svg{width:12px;height:8px}
.w24 svg{width:17px;height:14px}
.w26 svg{width:16px;height:15px}
.w20 svg{width:14px;height:15px}
.w34 svg{width:23px;height:16px}
.ime{font-size:13px}
.sg-t{width:16px;height:18px;font-size:15px;line-height:18px;border-radius:3px}
.clock{width:72px;display:flex;flex-direction:column;align-items:flex-end;font-size:12.500px;line-height:18px;flex:none}
.clock span:first-child{margin-right:17px}
.note{position:relative;width:56px;height:40px;flex:none}
.note svg{position:absolute;left:15px;top:11px;width:16px;height:16px}
.note-n{position:absolute;left:20px;top:17px;width:20px;height:20px;border-radius:50%;background:#444;border:1px solid #888;font-weight:700;font-size:11px;line-height:18px;text-align:center}
```
